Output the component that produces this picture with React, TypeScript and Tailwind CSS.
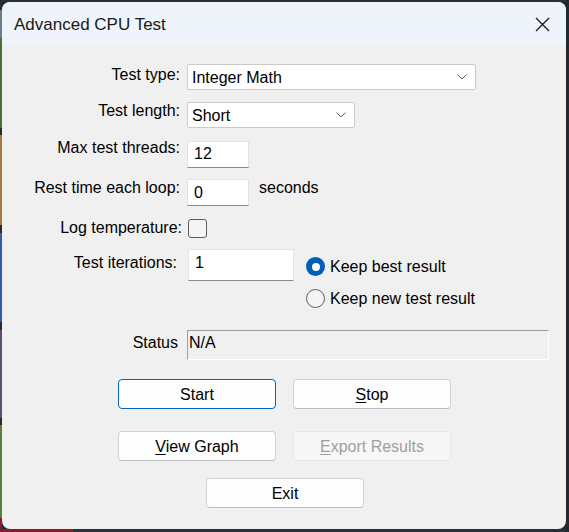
import React from 'react';

const font = { fontFamily: '"Liberation Sans", Arial, sans-serif' };

const stripe = [
  { h: 'h-[10px]', c: 'bg-[#2a2e30]' },
  { h: 'h-[28px]', c: 'bg-[#6f7c80]' },
  { h: 'h-[90px]', c: 'bg-[#4f6e3a]' },
  { h: 'h-[7px]', c: 'bg-[#2a2a2a]' },
  { h: 'h-[90px]', c: 'bg-[#a87a3a]' },
  { h: 'h-[8px]', c: 'bg-[#2a2a2a]' },
  { h: 'h-[89px]', c: 'bg-[#2f5ea8]' },
  { h: 'h-[8px]', c: 'bg-[#2a2a2a]' },
  { h: 'h-[88px]', c: 'bg-[#5e5068]' },
  { h: 'h-[7px]', c: 'bg-[#2a2a2a]' },
  { h: 'h-[93px]', c: 'bg-[#5a8040]' },
  { h: 'h-[14px]', c: 'bg-[#8a1a30]' },
];

const Chevron = () => (
  <svg width="10" height="6" viewBox="0 0 10 6" className="shrink-0">
    <path d="M0.5 0.5 L5 5 L9.5 0.5" fill="none" stroke="#5f5f5f" strokeWidth="1" />
  </svg>
);

const Select = ({ value, width }: { value: string; width: string }) => (
  <div className={`${width} h-[26px] bg-white border border-[#cbcbcb] rounded-[2px] flex items-start justify-between pl-[4px] pr-[8px]`}>
    <span className="leading-[18px] mt-[4px]">{value}</span>
    <div className="h-full flex items-center">
      <Chevron />
    </div>
  </div>
);

const TextBox = ({ value, width, height, pad }: { value: string; width: string; height: string; pad: string }) => (
  <div className={`${width} ${height} bg-white border border-[#e3e3e3] border-b-[#8a8a8a] pl-[6px] ${pad}`}>
    <span className="leading-[18px] block">{value}</span>
  </div>
);

const Button = ({ children, kind = 'normal' }: { children: React.ReactNode; kind?: 'normal' | 'default' | 'disabled' }) => {
  const styles =
    kind === 'default'
      ? 'bg-[#fdfdfd] border-[#0067c0] text-black'
      : kind === 'disabled'
        ? 'bg-[#f7f7f7] border-[#e6e6e6] text-[#a0a0a0]'
        : 'bg-[#fdfdfd] border-[#d2d2d2] border-b-[#bdbdbd] text-black';
  return (
    <div className={`w-[158px] h-[30px] rounded-[4px] border flex items-center justify-center pt-[2px] leading-[18px] ${styles}`}>
      {children}
    </div>
  );
};

export default function App() {
  return (
    <div className="w-[569px] h-[532px] bg-[#22292d] flex overflow-hidden text-[16px] text-black" style={font}>
      <div className="w-[2px] flex flex-col shrink-0">
        {stripe.map((s, i) => (
          <div key={i} className={`${s.h} ${s.c}`} />
        ))}
      </div>
      <div className="flex flex-col">
        <div className="h-[2px] bg-[#2b2f31]" />
        <div className="w-[564px] h-[527px] rounded-[8px] overflow-hidden bg-[#f0f0f0] flex flex-col">
          {/* title bar */}
          <div className="h-[42px] bg-[#eef4f9] flex items-start justify-between pl-[12px] pr-[16px] shrink-0">
            <span className="text-[17px] leading-[20px] mt-[13px] text-[#1a1a1a]">Advanced CPU Test</span>
            <svg width="15" height="15" viewBox="0 0 15 15" className="mt-[15px]">
              <path d="M1 1 L14 14 M14 1 L1 14" stroke="#1a1a1a" strokeWidth="1.3" />
            </svg>
          </div>

          {/* body */}
          <div className="flex flex-col">
            <div className="flex items-start h-[26px] mt-[20px]">
              <div className="w-[178px] text-right leading-[18px] mt-[2px]">Test type:</div>
              <div className="ml-[7px]">
                <Select value="Integer Math" width="w-[289px]" />
              </div>
            </div>

            <div className="flex items-start h-[26px] mt-[12px]">
              <div className="w-[178px] text-right leading-[18px]">Test length:</div>
              <div className="ml-[7px]">
                <Select value="Short" width="w-[168px]" />
              </div>
            </div>

            <div className="flex items-start h-[27px] mt-[13px]">
              <div className="w-[178px] text-right leading-[18px] -mt-[2px]">Max test threads:</div>
              <div className="ml-[7px]">
                <TextBox value="12" width="w-[62px]" height="h-[27px]" pad="pt-[3px]" />
              </div>
            </div>

            <div className="flex items-start h-[27px] mt-[11px]">
              <div className="w-[178px] text-right leading-[18px]">Rest time each loop:</div>
              <div className="ml-[7px]">
                <TextBox value="0" width="w-[62px]" height="h-[27px]" pad="pt-[4px]" />
              </div>
              <div className="ml-[10px] leading-[18px]">seconds</div>
            </div>

            <div className="flex items-start h-[19px] mt-[13px]">
              <div className="w-[180px] text-right leading-[18px]">Log temperature:</div>
              <div className="ml-[6px] w-[19px] h-[19px] rounded-[3px] border border-[#5e5e5e] bg-[#f4f4f4]" />
            </div>

            <div className="flex items-start mt-[11px]">
              <div className="w-[175px] text-right leading-[18px] mt-[5px]">Test iterations:</div>
              <div className="ml-[11px]">
                <TextBox value="1" width="w-[106px]" height="h-[32px]" pad="pt-[4px]" />
              </div>
              <div className="ml-[12px] mt-[8px] flex flex-col gap-[13px]">
                <div className="flex items-center h-[19px]">
                  <div className="w-[19px] h-[19px] rounded-full bg-[#005fb8] flex items-center justify-center">
                    <div className="w-[8px] h-[8px] rounded-full bg-white" />
                  </div>
                  <span className="ml-[5px] leading-[18px]">Keep best result</span>
                </div>
                <div className="flex items-center h-[19px]">
                  <div className="w-[19px] h-[19px] rounded-full border border-[#5e5e5e] bg-[#f4f4f4]" />
                  <span className="ml-[5px] leading-[18px]">Keep new test result</span>
                </div>
              </div>
            </div>

            <div className="flex items-start h-[30px] mt-[22px]">
              <div className="w-[176px] text-right leading-[18px] mt-[4px]">Status</div>
              <div className="ml-[9px] w-[362px] h-[30px] border border-t-[#a0a0a0] border-l-[#a0a0a0] border-r-white border-b-white pl-[1px] pt-[3px]">
                <span className="leading-[18px] block">N/A</span>
              </div>
            </div>

            <div className="flex items-start mt-[19px] ml-[116px] gap-[17px]">
              <Button kind="default">Start</Button>
              <Button>
                <span>
                  <span className="underline underline-offset-2">S</span>top
                </span>
              </Button>
            </div>

            <div className="flex items-start mt-[22px] ml-[116px] gap-[17px]">
              <Button>
                <span>
                  <span className="underline underline-offset-2">V</span>iew Graph
                </span>
              </Button>
              <Button kind="disabled">
                <span>
                  <span className="underline underline-offset-2">E</span>xport Results
                </span>
              </Button>
            </div>

            <div className="flex items-start mt-[17px] ml-[204px]">
              <Button>Exit</Button>
            </div>
          </div>
        </div>
        <div className="h-[3px] flex">
          <div className="w-[71px] bg-[#8a1a30]" />
          <div className="flex-1 bg-[#2a3035]" />
        </div>
      </div>
    </div>
  );
}
